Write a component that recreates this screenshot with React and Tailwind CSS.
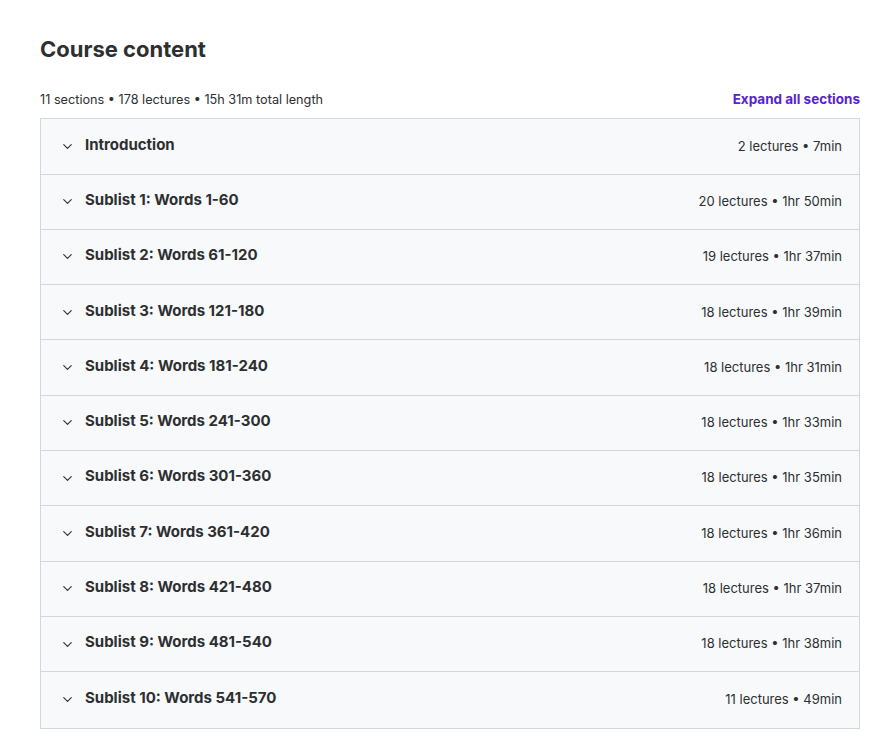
import React from 'react';
import { ChevronDown } from 'lucide-react';

const sections = [
  { title: 'Introduction', meta: '2 lectures • 7min' },
  { title: 'Sublist 1: Words 1-60', meta: '20 lectures • 1hr 50min' },
  { title: 'Sublist 2: Words 61-120', meta: '19 lectures • 1hr 37min' },
  { title: 'Sublist 3: Words 121-180', meta: '18 lectures • 1hr 39min' },
  { title: 'Sublist 4: Words 181-240', meta: '18 lectures • 1hr 31min' },
  { title: 'Sublist 5: Words 241-300', meta: '18 lectures • 1hr 33min' },
  { title: 'Sublist 6: Words 301-360', meta: '18 lectures • 1hr 35min' },
  { title: 'Sublist 7: Words 361-420', meta: '18 lectures • 1hr 36min' },
  { title: 'Sublist 8: Words 421-480', meta: '18 lectures • 1hr 37min' },
  { title: 'Sublist 9: Words 481-540', meta: '18 lectures • 1hr 38min' },
  { title: 'Sublist 10: Words 541-570', meta: '11 lectures • 49min' },
];

const SectionRow = ({ title, meta, last }) => (
  <div
    className={`flex items-center justify-between h-[55.3px] pl-[19px] pr-[17px] bg-[#f7f9fa] ${
      last ? '' : 'border-b border-[#d1d7dc]'
    }`}
  >
    <div className="flex items-center gap-[10px]">
      <ChevronDown size={15} strokeWidth={1.8} className="text-[#2d2f31]" />
      <span className="text-[15px] font-bold text-[#2d2f31] -mt-[3px]">{title}</span>
    </div>
    <span className="text-[13px] text-[#2d2f31]">{meta}</span>
  </div>
);

export default function App() {
  return (
    <div className="bg-white min-h-screen pl-[40px] pr-[32px] pt-[34px] font-['Inter',sans-serif]">
      <h2 className="text-[22px] font-bold text-[#2d2f31] leading-[30px]">Course content</h2>

      <div className="flex items-center justify-between mt-[25px] mb-[9px]">
        <span className="text-[12.7px] text-[#2d2f31]">11 sections • 178 lectures • 15h 31m total length</span>
        <button className="text-[13.5px] font-bold text-[#5624d0]">Expand all sections</button>
      </div>

      <div className="border border-[#d1d7dc]">
        {sections.map((s, i) => (
          <SectionRow key={s.title} {...s} last={i === sections.length - 1} />
        ))}
      </div>
    </div>
  );
}
